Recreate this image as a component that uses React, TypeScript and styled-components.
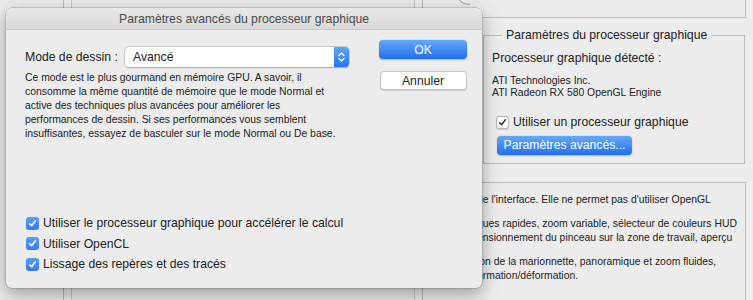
import React from "react";
import styled, { createGlobalStyle } from "styled-components";

const GlobalStyle = createGlobalStyle`
  html, body {
    margin: 0;
    padding: 0;
    background: #ececec;
  }
  body {
    font-family: "Liberation Sans", Arial, sans-serif;
    color: #262626;
  }
`;

const Screen = styled.div`
  position: relative;
  width: 753px;
  height: 300px;
  overflow: hidden;
  background: #ececec;
  display: flex;
`;

/* ---------- window behind the dialog ---------- */

const LeftPane = styled.div`
  width: 440px;
  padding-left: 63px;
  box-sizing: border-box;
  display: flex;
`;

const ListOuter = styled.div`
  width: 360px;
  height: 100%;
  box-sizing: border-box;
  border-left: 1px solid #b9b9b9;
  border-right: 1px solid #b9b9b9;
  padding: 0 7px;
`;

const ListInner = styled.div`
  height: 100%;
  border-left: 1px solid #c4c4c4;
  border-right: 1px solid #c4c4c4;
  background: #e9e9e9;
`;

const RightPane = styled.div`
  width: 306px;
  display: flex;
  flex-direction: column;
`;

const TopBox = styled.div`
  position: relative;
  height: 18px;
  box-sizing: border-box;
  border-right: 1px solid #bcbcbc;
  border-bottom: 1px solid #bcbcbc;
`;

const PinIcon = styled.svg`
  position: absolute;
  left: 16px;
  top: -6px;
`;

const Group = styled.fieldset`
  margin: 10px 1px 0 43px;
  padding: 0 8px 8px 8px;
  height: 136px;
  box-sizing: border-box;
  border: 1px solid #bcbcbc;
  min-width: 0;
`;

const Legend = styled.legend`
  margin-left: 10px;
  padding: 0 4px;
  font-size: 12.2px;
  color: #222;
`;

const Heading = styled.div`
  font-size: 12.2px;
  color: #222;
  margin-top: 9px;
`;

const SmallText = styled.div`
  font-size: 10.4px;
  line-height: 12px;
  color: #222;
  white-space: nowrap;
`;

const InfoBlock = styled.div`
  margin-top: 10px;
`;

const CheckRow = styled.label<{ $gap?: number }>`
  display: flex;
  align-items: center;
  gap: 4px;
  font-size: 12.2px;
  color: #222;
  white-space: nowrap;
  margin-top: ${(p) => p.$gap ?? 0}px;
  height: 20px;
`;

const Box = styled.span<{ $checked?: boolean }>`
  width: 13px;
  height: 13px;
  box-sizing: border-box;
  border-radius: 3px;
  display: inline-flex;
  align-items: center;
  justify-content: center;
  background: ${(p) => (p.$checked ? "linear-gradient(#5b9ef7, #2f7ff2)" : "#fff")};
  border: ${(p) => (p.$checked ? "none" : "1px solid #b5b5b5")};
  box-shadow: ${(p) => (p.$checked ? "none" : "0 0.5px 1px rgba(0,0,0,0.15)")};
`;

const BlueButton = styled.button<{ $width: number }>`
  width: ${(p) => p.$width}px;
  height: 19px;
  padding: 0;
  border: none;
  border-radius: 4px;
  font-family: inherit;
  font-size: 12.2px;
  color: #fff;
  background: linear-gradient(#66a8f9, #1f70ef);
  box-shadow: 0 0.5px 1.5px rgba(0, 0, 0, 0.25);
`;

const PlainButton = styled.button<{ $width: number }>`
  width: ${(p) => p.$width}px;
  height: 19px;
  padding: 0;
  border: 1px solid #c9c9c9;
  border-radius: 4px;
  font-family: inherit;
  font-size: 12.2px;
  color: #222;
  background: #fff;
  box-shadow: 0 0.5px 1px rgba(0, 0, 0, 0.15);
`;

const ButtonSlot = styled.div`
  padding-left: 5px;
  margin-top: 3px;
`;

const LowerBox = styled.div`
  flex: 1;
  margin-top: 18px;
  border-top: 1px solid #bcbcbc;
  border-right: 1px solid #bcbcbc;
  padding: 10px 0 0 37px;
  box-sizing: border-box;
`;

const Para = styled.div`
  font-size: 10.4px;
  line-height: 14px;
  white-space: nowrap;
  color: #222;
  margin-bottom: 10px;
`;

/* ---------- dialog ---------- */

const Dialog = styled.div`
  position: absolute;
  left: 6px;
  top: 8px;
  width: 476px;
  height: 280px;
  border-radius: 6px;
  background: #ececec;
  box-shadow: 0 0 0 0.5px rgba(0, 0, 0, 0.25), 0 6px 18px rgba(0, 0, 0, 0.35);
  display: flex;
  flex-direction: column;
  overflow: hidden;
  z-index: 2;
`;

const TitleBar = styled.div`
  height: 21px;
  flex: none;
  display: flex;
  align-items: center;
  justify-content: center;
  font-size: 12.2px;
  color: #4a4a4a;
  background: linear-gradient(#e8e8e8, #d9d9d9);
  border-bottom: 1px solid #c8c8c8;
`;

const Body = styled.div`
  flex: 1;
  display: flex;
  flex-direction: column;
  padding: 0 14px 14px 19px;
`;

const TopRow = styled.div`
  display: flex;
  justify-content: space-between;
`;

const FormCol = styled.div`
  width: 324px;
  padding-top: 17px;
`;

const ButtonCol = styled.div`
  display: flex;
  flex-direction: column;
  align-items: center;
  gap: 12px;
  padding-top: 10px;
  width: 90px;
`;

const ModeRow = styled.div`
  display: flex;
  align-items: center;
  justify-content: space-between;
  font-size: 12.2px;
  color: #222;
`;

const Select = styled.div`
  width: 224px;
  height: 20px;
  box-sizing: border-box;
  display: flex;
  align-items: center;
  background: #fff;
  border-radius: 4px;
  box-shadow: 0 0 0 0.5px rgba(0, 0, 0, 0.22), 0 0.5px 1.5px rgba(0, 0, 0, 0.2);
  overflow: hidden;
`;

const SelectValue = styled.span`
  flex: 1;
  padding-left: 8px;
  font-size: 12.2px;
  color: #222;
`;

const SelectArrows = styled.span`
  width: 15px;
  height: 100%;
  display: flex;
  align-items: center;
  justify-content: center;
  background: linear-gradient(#62a5f8, #2273f0);
`;

const Description = styled.p`
  margin: 4px 0 0;
  font-size: 10.4px;
  line-height: 14px;
  color: #222;
  white-space: nowrap;
`;

const Options = styled.div`
  margin-top: auto;
  display: flex;
  flex-direction: column;
  gap: 0.5px;
  padding-left: 1px;
`;

const Check = ({ dark }: { dark?: boolean }) => (
  <svg width="9" height="9" viewBox="0 0 9 9">
    <path
      d="M1.6 4.8 L3.6 6.8 L7.4 1.8"
      fill="none"
      stroke={dark ? "#333" : "#fff"}
      strokeWidth="1.5"
      strokeLinecap="round"
      strokeLinejoin="round"
    />
  </svg>
);

const ChevronPair = () => (
  <svg width="7" height="12" viewBox="0 0 7 12">
    <path d="M1 4.5 L3.5 2 L6 4.5" fill="none" stroke="#fff" strokeWidth="1.3" strokeLinecap="round" strokeLinejoin="round" />
    <path d="M1 7.5 L3.5 10 L6 7.5" fill="none" stroke="#fff" strokeWidth="1.3" strokeLinecap="round" strokeLinejoin="round" />
  </svg>
);

const dialogOptions = [
  "Utiliser le processeur graphique pour accélérer le calcul",
  "Utiliser OpenCL",
  "Lissage des repères et des tracés",
];

export default function App() {
  return (
    <>
      <GlobalStyle />
      <Screen>
        <LeftPane>
          <ListOuter>
            <ListInner />
          </ListOuter>
        </LeftPane>

        <RightPane>
          <TopBox>
            <PinIcon width="16" height="14" viewBox="0 0 16 14">
              <path d="M1 2 C3 8 9 11 14 10" fill="none" stroke="#9a9a9a" strokeWidth="1" />
            </PinIcon>
          </TopBox>

          <Group>
            <Legend>Paramètres du processeur graphique</Legend>
            <Heading>Processeur graphique détecté :</Heading>
            <InfoBlock>
              <SmallText>ATI Technologies Inc.</SmallText>
              <SmallText>ATI Radeon RX 580 OpenGL Engine</SmallText>
            </InfoBlock>
            <CheckRow $gap={13} style={{ paddingLeft: 4 }}>
              <Box>
                <Check dark />
              </Box>
              Utiliser un processeur graphique
            </CheckRow>
            <ButtonSlot>
              <BlueButton $width={135}>Paramètres avancés...</BlueButton>
            </ButtonSlot>
          </Group>

          <LowerBox>
            <Para>de l'interface. Elle ne permet pas d'utiliser OpenGL</Para>
            <Para>
              ques rapides, zoom variable, sélecteur de couleurs HUD
              <br />
              ensionnement du pinceau sur la zone de travail, aperçu
            </Para>
            <Para>
              ion de la marionnette, panoramique et zoom fluides,
              <br />
              ormation/déformation.
            </Para>
          </LowerBox>
        </RightPane>

        <Dialog>
          <TitleBar>Paramètres avancés du processeur graphique</TitleBar>
          <Body>
            <TopRow>
              <FormCol>
                <ModeRow>
                  Mode de dessin :
                  <Select>
                    <SelectValue>Avancé</SelectValue>
                    <SelectArrows>
                      <ChevronPair />
                    </SelectArrows>
                  </Select>
                </ModeRow>
                <Description>
                  Ce mode est le plus gourmand en mémoire GPU. A savoir, il
                  <br />
                  consomme la même quantité de mémoire que le mode Normal et
                  <br />
                  active des techniques plus avancées pour améliorer les
                  <br />
                  performances de dessin. Si ses performances vous semblent
                  <br />
                  insuffisantes, essayez de basculer sur le mode Normal ou De base.
                </Description>
              </FormCol>
              <ButtonCol>
                <BlueButton $width={88}>OK</BlueButton>
                <PlainButton $width={87}>Annuler</PlainButton>
              </ButtonCol>
            </TopRow>

            <Options>
              {dialogOptions.map((label) => (
                <CheckRow key={label}>
                  <Box $checked>
                    <Check />
                  </Box>
                  {label}
                </CheckRow>
              ))}
            </Options>
          </Body>
        </Dialog>
      </Screen>
    </>
  );
}
